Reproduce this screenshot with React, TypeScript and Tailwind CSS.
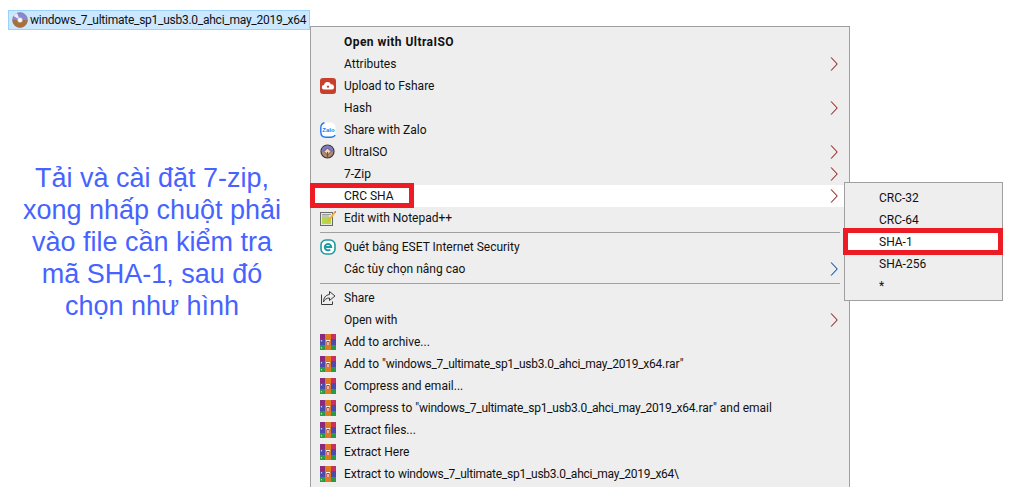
type Tone = "red" | "blue";
type Row = { label: string; icon?: string; arrow?: Tone; bold?: boolean; hot?: boolean };

const fileName = "windows_7_ultimate_sp1_usb3.0_ahci_may_2019_x64";

const groupOne: Row[] = [
  { label: "Open with UltraISO", bold: true },
  { label: "Attributes", arrow: "red" },
  { label: "Upload to Fshare", icon: "fshare" },
  { label: "Hash", arrow: "red" },
  { label: "Share with Zalo", icon: "zalo" },
  { label: "UltraISO", icon: "iso", arrow: "red" },
  { label: "7-Zip", arrow: "red" },
  { label: "CRC SHA", arrow: "red", hot: true },
  { label: "Edit with Notepad++", icon: "notepad" },
];

const groupTwo: Row[] = [
  { label: "Quét bằng ESET Internet Security", icon: "eset" },
  { label: "Các tùy chọn nâng cao", arrow: "blue" },
];

const groupThree: Row[] = [
  { label: "Share", icon: "share" },
  { label: "Open with", arrow: "red" },
  { label: "Add to archive...", icon: "rar" },
  { label: `Add to "${fileName}.rar"`, icon: "rar" },
  { label: "Compress and email...", icon: "rar" },
  { label: `Compress to "${fileName}.rar" and email`, icon: "rar" },
  { label: "Extract files...", icon: "rar" },
  { label: "Extract Here", icon: "rar" },
  { label: `Extract to ${fileName}\\`, icon: "rar" },
];

function RowIcon({ name }: { name?: string }) {
  if (name === "fshare") {
    return (
      <svg width="16" height="16" viewBox="0 0 16 16">
        <rect width="16" height="16" rx="3" fill="#c8402c" />
        <path d="M4 11.500a2.200 2.200 0 0 1 0-4.400A3.600 3.600 0 0 1 11 6.400a2.600 2.600 0 0 1 1 5.100z" fill="#fff" />
        <path d="M8 7.400v2.600M6.800 8.700h2.400" stroke="#c8402c" strokeWidth="1" />
      </svg>
    );
  }
  if (name === "zalo") {
    return (
      <svg width="16" height="16" viewBox="0 0 16 16">
        <rect x="0.500" y="0.500" width="15" height="15" rx="5" fill="#fff" />
        <path d="M4.500 .8C2 1.400 .8 3 .8 6v4c0 3 2 5.200 5.200 5.200h5c2 0 3.400-.6 4.200-2" fill="none" stroke="#1e78f0" strokeWidth="1.400" />
        <text x="8.500" y="10" textAnchor="middle" fontSize="6" fontWeight="700" fill="#1e78f0" fontFamily="Liberation Sans, sans-serif">Zalo</text>
      </svg>
    );
  }
  if (name === "iso") {
    return (
      <svg width="16" height="16" viewBox="0 0 16 16">
        <circle cx="7.500" cy="7.500" r="6.500" fill="#b08a70" stroke="#333" strokeWidth="1.200" />
        <path d="M7.500 1.500A6 6 0 0 1 13.500 7.500L7.500 7.500 1.500 7.500A6 6 0 0 1 7.500 1.500z" fill="#7c78c8" />
        <path d="M7.500 4 11 7.500 7.500 11 4 7.500z" fill="#e8d8c0" stroke="#6a4030" strokeWidth="0.800" />
        <path d="M7.500 8v5" stroke="#8a4a30" strokeWidth="1.200" />
      </svg>
    );
  }
  if (name === "notepad") {
    return (
      <svg width="16" height="16" viewBox="0 0 16 16">
        <rect x="0.500" y="2.500" width="12" height="13" fill="#e8e8e0" stroke="#6a6a6a" />
        <rect x="2" y="7" width="9" height="7" fill="#b4d84a" />
        <path d="M2 4.500h9M2 6h7" stroke="#8a8a8a" strokeWidth="0.800" />
        <path d="M7 11 14 2l1.400 1L9 12l-2.200 1z" fill="#e8b830" />
        <path d="M14 2l1.400 1 .6-2z" fill="#c0202a" />
      </svg>
    );
  }
  if (name === "eset") {
    return (
      <svg width="16" height="16" viewBox="0 0 16 16">
        <rect x="1" y="1" width="14" height="14" rx="5" fill="#fff" stroke="#1f9aa0" strokeWidth="1.600" />
        <path d="M4.800 8h6.400a3.200 3.200 0 1 0-1 2.500" fill="none" stroke="#1f9aa0" strokeWidth="2" />
      </svg>
    );
  }
  if (name === "share") {
    return (
      <svg width="16" height="16" viewBox="0 0 16 16" fill="none" stroke="#3a3a3a" strokeWidth="1">
        <path d="M1.500 4.500v10h11v-3" />
        <path d="M9.500 1.500 15 6l-5.500 4.500V8C6.500 8 4.500 9.500 3.500 12c0-4 2-7 6-7.500z" />
      </svg>
    );
  }
  if (name === "rar") {
    return (
      <svg width="16" height="16" viewBox="0 0 16 16">
        <rect width="16" height="5" fill="#c83060" />
        <rect width="5" height="5" fill="#8a2a7a" />
        <rect y="5" width="16" height="6" fill="#4a4ab0" />
        <rect y="11" width="16" height="5" fill="#2a9a45" />
        <rect x="5" width="6" height="16" fill="#e07a20" />
        <rect x="6" y="6" width="4" height="5" fill="#f4f0e8" />
        <path d="M6.800 11V7.500h2.400V11" fill="none" stroke="#c03020" strokeWidth="1" />
        <path d="M1.500 6v1.500M1.500 13v1.500" stroke="#f0d040" strokeWidth="1.200" />
      </svg>
    );
  }
  return null;
}

// cleartype fringe on the windows chevrons, a coloured edge under a dark core
function Chevron({ tone }: { tone: Tone }) {
  const edge = tone === "red" ? "#d0604a" : "#3a86d8";
  const core = tone === "red" ? "#6a2a3a" : "#2a4a80";
  return (
    <svg width="9" height="14" viewBox="0 0 9 14" fill="none">
      <path d="M1.200 .5 7.200 7 1.200 13.500" stroke={edge} strokeWidth="1.100" />
      <path d="M1 .5 7 7 1 13.500" stroke={core} strokeWidth="0.600" />
    </svg>
  );
}

// Roboto's underscore runs wider than the original font, so the file name is tightened
function RowLabel({ text }: { text: string }) {
  if (!text.includes(fileName)) return <>{text}</>;
  const [before, after] = text.split(fileName);
  return (
    <>
      {before}
      <span className="tracking-[-0.26px]">{fileName}</span>
      {after}
    </>
  );
}

function MenuRow({ row }: { row: Row }) {
  return (
    <div className={`relative flex h-[22px] items-center pl-[9px] pr-[10px] ${row.hot ? "bg-white" : ""}`}>
      <span className="flex w-[24px] shrink-0 items-center">
        <RowIcon name={row.icon} />
      </span>
      <span className={`flex-1 whitespace-nowrap ${row.bold ? "font-bold tracking-[0.45px]" : ""}`}>
        <RowLabel text={row.label} />
      </span>
      {row.arrow && <Chevron tone={row.arrow} />}
      {row.hot && <div className="absolute left-[-1px] top-[-2px] h-[25px] w-[104px] border-[5px] border-[#ed1c24]" />}
    </div>
  );
}

function Separator() {
  return <div className="mx-[9px] my-[3px] h-px bg-[#a0a0a0]" />;
}

export default function App() {
  return (
    <div className="relative flex h-[487px] w-[1013px] overflow-hidden bg-white font-['Roboto',sans-serif]">
      <div className="flex w-[310px] shrink-0 flex-col">
        <div className="ml-[8px] mt-[10px] flex h-[20px] w-[302px] items-center gap-[2px] border border-[#99d1ff] bg-[#cce8ff] pl-[3px] text-[12px] text-[#111]">
          <svg className="shrink-0" width="16" height="16" viewBox="0 0 16 16">
            <circle cx="8" cy="8" r="7.500" fill="#8a86d8" stroke="#777" strokeWidth="0.500" />
            <path d="M8 8 .5 8A7.500 7.500 0 0 0 15.500 8z" fill="#a8703a" />
            <path d="M8 8 1.500 4A7.500 7.500 0 0 1 5 1z" fill="#e8e8f8" />
            <circle cx="8" cy="8" r="2.500" fill="#fff" stroke="#999" strokeWidth="0.500" />
          </svg>
          <span className="whitespace-nowrap tracking-[-0.26px]">{fileName}</span>
        </div>
        <p className="mt-[132px] pr-[6px] text-center font-['Liberation_Sans',sans-serif] text-[27px] leading-[32px] text-[#4763ff]">
          Tải và cài đặt 7-zip,
          <br />
          xong nhấp chuột phải
          <br />
          vào file cần kiểm tra
          <br />
          mã SHA-1, sau đó
          <br />
          chọn như hình
        </p>
      </div>

      <div className="mt-[26px] h-[480px] w-[540px] shrink-0 border border-[#a0a0a0] bg-[#eeeeee] pt-[4px] text-[12px] text-[#111]">
        {groupOne.map((row) => (
          <MenuRow key={row.label} row={row} />
        ))}
        <Separator />
        {groupTwo.map((row) => (
          <MenuRow key={row.label} row={row} />
        ))}
        <Separator />
        {groupThree.map((row) => (
          <MenuRow key={row.label} row={row} />
        ))}
      </div>

      <div className="absolute left-[844px] top-[182px] h-[119px] w-[159px] border border-[#a0a0a0] bg-[#eeeeee] pt-[4px] text-[12px] text-[#111]">
        {["CRC-32", "CRC-64", "SHA-1", "SHA-256", "*"].map((label) => (
          <div key={label} className={`flex h-[22px] items-center pl-[34px] ${label === "SHA-1" ? "bg-white" : ""}`}>
            {label}
          </div>
        ))}
      </div>
      <div className="absolute left-[843px] top-[228px] h-[27px] w-[160px] border-[5px] border-[#ed1c24]" />
    </div>
  );
}
